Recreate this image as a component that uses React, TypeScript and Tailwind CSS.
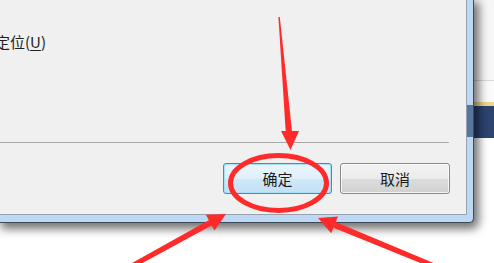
import React from "react";

const cjk = "font-['Noto_Sans_CJK_SC','Microsoft_YaHei',sans-serif]";

const Annotations = () => (
  <svg
    className="absolute inset-0 pointer-events-none z-20"
    width={494}
    height={263}
    viewBox="0 0 494 263"
    xmlns="http://www.w3.org/2000/svg"
  >
    <g fill="#ff2b2b">
      {/* top arrow */}
      <polygon points="278.4,17 279.8,17 292.2,133 285.8,133" />
      <polygon points="281,131 299,131 290.5,150" />
      {/* bottom left arrow */}
      <polygon points="128.8,264.8 131.2,269.2 212.4,224.9 209.6,219.7" />
      <polygon points="205.9,214.8 214.5,230.6 226,214" />
      {/* bottom right arrow */}
      <polygon points="433,262.7 431,267.3 333.5,227.7 335.7,222.1" />
      <polygon points="338,216.6 331.2,233.2 318,218" />
    </g>
    <ellipse cx={278.5} cy={183} rx={48} ry={27.5} fill="none" stroke="#ff2b2b" strokeWidth={5} />
  </svg>
);

const DialogButton = ({ label, primary }: { label: string; primary?: boolean }) => (
  <button
    type="button"
    className={
      primary
        ? "w-[109px] h-[31px] rounded-[3px] border border-[#3c8dd0] shadow-[inset_0_0_0_1px_#a8e0fa] bg-[linear-gradient(to_bottom,#eaf5fc_0%,#dff0fb_50%,#cfe8f7_51%,#c2e1f4_100%)] text-[15px] leading-none text-[#1a1a1a] " + cjk
        : "w-[110px] h-[31px] rounded-[3px] border border-[#8a8a8a] shadow-[inset_0_0_0_1px_rgba(255,255,255,0.75)] bg-[linear-gradient(to_bottom,#f3f3f3_0%,#ebebeb_50%,#dddddd_51%,#d0d0d0_100%)] text-[15px] leading-none text-[#1a1a1a] " + cjk
    }
  >
    {label}
  </button>
);

const App = () => {
  return (
    <div className="relative w-[494px] h-[263px] overflow-hidden bg-white">
      <div className="flex items-start">
        {/* dialog window */}
        <div className="relative z-10 flex flex-col w-[474px] border-r border-b border-[#3f4a57] rounded-br-[5px] bg-[#bcd8f3] shadow-[3px_4px_10px_2px_rgba(0,0,0,0.55)]">
          <div className="flex">
            <div className="flex flex-col w-[467px] h-[215px] bg-[#f0f0f0] border-r border-b border-[#9aa3ad]">
              <div className={"mt-[34px] ml-[-5px] h-[15px] leading-[15px] text-[15px] text-[#202020] whitespace-nowrap " + cjk}>
                定位(<span className="underline underline-offset-2">U</span>)
              </div>
              <div className="mt-[93px] mr-[17px] h-px bg-[#a9a9a9]" />
              <div className="mt-[20px] flex justify-end gap-[8px] pr-[16px]">
                <DialogButton label="确定" primary />
                <DialogButton label="取消" />
              </div>
            </div>
            <div className="flex flex-col w-[6px]">
              <div className="h-[105px] bg-[#bcd8f3]" />
              <div className="h-[32px] bg-[#56769f]" />
              <div className="flex-1 bg-[#bcd8f3]" />
            </div>
          </div>
          <div className="h-[7px]" />
        </div>

        {/* desktop behind the window */}
        <div className="flex flex-col w-[20px] h-[263px]">
          <div className="h-[80px] bg-[#f6f6f6]" />
          <div className="h-px bg-[#d9d9d9]" />
          <div className="h-[21px] bg-[#fafafa]" />
          <div className="h-[4px] bg-[#efd68a]" />
          <div className="h-[32px] bg-[#2d4470]" />
          <div className="flex-1 bg-white" />
        </div>
      </div>

      <Annotations />
    </div>
  );
};

export default App;
